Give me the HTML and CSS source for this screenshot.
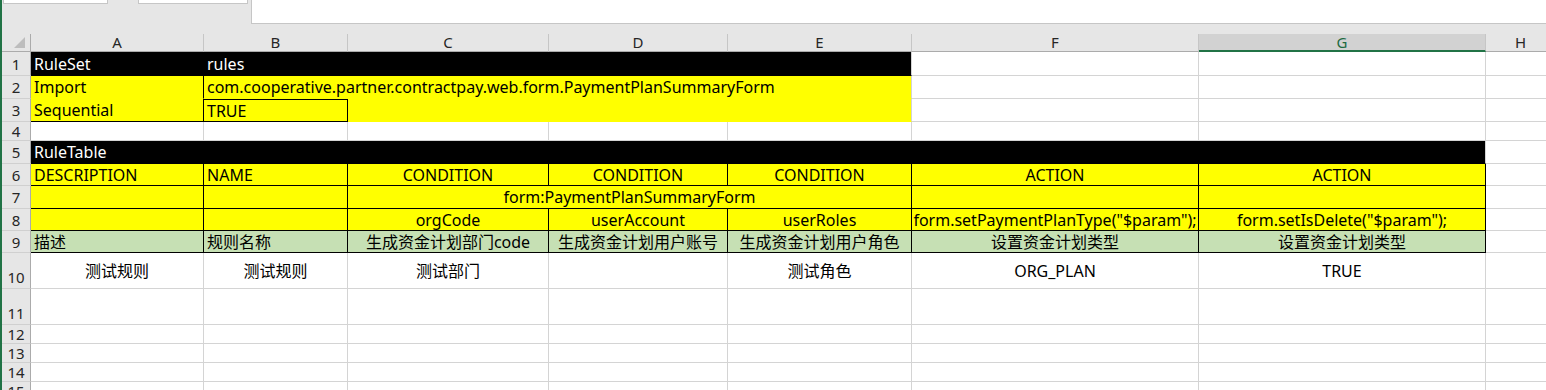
FILE: index.html
```html
<!DOCTYPE html>
<html lang="zh-CN">
<head>
    <meta charset="UTF-8">
    <meta name="viewport" content="width=device-width, initial-scale=1.0">
    <title>RuleTable - Excel</title>
    <link rel="stylesheet" href="styles.css">
</head>

<body>
    <div class="excel">
        <!-- barre du haut : zone de nom + barre de formule -->
        <div class="toolbar">
            <div class="toolbar-left">
                <span class="stub stub-name"></span>
                <span class="stub stub-fx"></span>
            </div>
            <div class="formula-bar"></div>
        </div>

        <!-- la feuille -->
        <div class="sheet">
            <!-- entetes de colonnes -->
            <div class="corner">
                <svg width="12" height="12" viewBox="0 0 12 12"><polygon points="11,0 11,11 0,11" fill="#bdbdbd"/></svg>
            </div>
            <div class="colhead">A</div>
            <div class="colhead">B</div>
            <div class="colhead">C</div>
            <div class="colhead">D</div>
            <div class="colhead">E</div>
            <div class="colhead">F</div>
            <div class="colhead selected">G</div>
            <div class="colhead">H</div>

            <!-- ligne 1 -->
            <div class="rowhead">1</div>
            <div class="c blk">RuleSet</div>
            <div class="c blk span4 edge">rules</div>
            <div class="c"></div>
            <div class="c"></div>
            <div class="c"></div>

            <!-- ligne 2 -->
            <div class="rowhead">2</div>
            <div class="c yel br">Import</div>
            <div class="c yel span4 edge">com.cooperative.partner.contractpay.web.form.PaymentPlanSummaryForm</div>
            <div class="c"></div>
            <div class="c"></div>
            <div class="c"></div>

            <!-- ligne 3 -->
            <div class="rowhead">3</div>
            <div class="c yel br bb">Sequential</div>
            <div class="c yel br bb bt">TRUE</div>
            <div class="c yel span3 edge"></div>
            <div class="c"></div>
            <div class="c"></div>
            <div class="c"></div>

            <!-- ligne 4 -->
            <div class="rowhead">4</div>
            <div class="c"></div>
            <div class="c"></div>
            <div class="c"></div>
            <div class="c"></div>
            <div class="c"></div>
            <div class="c"></div>
            <div class="c"></div>
            <div class="c"></div>

            <!-- ligne 5 -->
            <div class="rowhead">5</div>
            <div class="c blk span7 edge">RuleTable</div>
            <div class="c"></div>

            <!-- ligne 6 -->
            <div class="rowhead">6</div>
            <div class="c yel bk">DESCRIPTION</div>
            <div class="c yel bk">NAME</div>
            <div class="c yel bk ctr">CONDITION</div>
            <div class="c yel bk ctr">CONDITION</div>
            <div class="c yel bk ctr">CONDITION</div>
            <div class="c yel bk ctr">ACTION</div>
            <div class="c yel bk ctr">ACTION</div>
            <div class="c"></div>

            <!-- ligne 7 -->
            <div class="rowhead">7</div>
            <div class="c yel bk"></div>
            <div class="c yel bk"></div>
            <div class="c yel bk ctr span3">form:PaymentPlanSummaryForm</div>
            <div class="c yel bk"></div>
            <div class="c yel bk"></div>
            <div class="c"></div>

            <!-- ligne 8 -->
            <div class="rowhead">8</div>
            <div class="c yel bk"></div>
            <div class="c yel bk"></div>
            <div class="c yel bk ctr">orgCode</div>
            <div class="c yel bk ctr">userAccount</div>
            <div class="c yel bk ctr">userRoles</div>
            <div class="c yel bk ctr">form.setPaymentPlanType("$param");</div>
            <div class="c yel bk ctr">form.setIsDelete("$param");</div>
            <div class="c"></div>

            <!-- ligne 9 -->
            <div class="rowhead">9</div>
            <div class="c grn bk">描述</div>
            <div class="c grn bk">规则名称</div>
            <div class="c grn bk ctr">生成资金计划部门code</div>
            <div class="c grn bk ctr">生成资金计划用户账号</div>
            <div class="c grn bk ctr">生成资金计划用户角色</div>
            <div class="c grn bk ctr">设置资金计划类型</div>
            <div class="c grn bk ctr">设置资金计划类型</div>
            <div class="c"></div>

            <!-- ligne 10 -->
            <div class="rowhead tall">10</div>
            <div class="c ctr">测试规则</div>
            <div class="c ctr">测试规则</div>
            <div class="c ctr">测试部门</div>
            <div class="c ctr"></div>
            <div class="c ctr">测试角色</div>
            <div class="c ctr">ORG_PLAN</div>
            <div class="c ctr">TRUE</div>
            <div class="c"></div>

            <!-- lignes vides -->
            <div class="rowhead tall">11</div>
            <div class="c"></div><div class="c"></div><div class="c"></div><div class="c"></div>
            <div class="c"></div><div class="c"></div><div class="c"></div><div class="c"></div>

            <div class="rowhead">12</div>
            <div class="c"></div><div class="c"></div><div class="c"></div><div class="c"></div>
            <div class="c"></div><div class="c"></div><div class="c"></div><div class="c"></div>

            <div class="rowhead">13</div>
            <div class="c"></div><div class="c"></div><div class="c"></div><div class="c"></div>
            <div class="c"></div><div class="c"></div><div class="c"></div><div class="c"></div>

            <div class="rowhead">14</div>
            <div class="c"></div><div class="c"></div><div class="c"></div><div class="c"></div>
            <div class="c"></div><div class="c"></div><div class="c"></div><div class="c"></div>

            <div class="rowhead">15</div>
            <div class="c"></div><div class="c"></div><div class="c"></div><div class="c"></div>
            <div class="c"></div><div class="c"></div><div class="c"></div><div class="c"></div>
        </div>
    </div>
</body>

</html>
```

FILE: styles.css
```css
body {
    margin: 0;
    background: #fff;
    font-family: "Noto Sans", "Noto Sans CJK SC", sans-serif;
}
/* cadre de la fenetre, liseré vert a gauche */
.excel {
    width: 1546px;
    height: 390px;
    overflow: hidden;
    border-left: 2px solid #217346;
    box-sizing: border-box;
}

/* barre du haut */
.toolbar {
    display: flex;
    height: 34px;
    background: #e6e6e6;
}
.toolbar-left {
    display: flex;
    align-items: flex-start;
    width: 249px;
}
.stub {
    display: block;
    height: 3px;
    background: #fff;
    border: 1px solid #c6c6c6;
    border-top: 0;
}
.stub-name {
    margin-left: 1px;
    width: 103px;
}
.stub-fx {
    margin-left: 30px;
    width: 108px;
}
.formula-bar {
    flex: 1;
    height: 24px;
    box-sizing: border-box;
    background: #fff;
    border-left: 1px solid #c6c6c6;
    border-bottom: 1px solid #c6c6c6;
}

/* grille de la feuille */
.sheet {
    display: grid;
    grid-template-columns: 29px 173px 144px 201px 179px 184px 287px 287px 70px;
    grid-template-rows: 18px 24px 23px 23px 19px 23px 22px 23px 22px 22px 36px 36px 19px 19px 19px 19px;
}
.sheet > div {
    box-sizing: border-box;
    min-width: 0;
}

/* entetes */
.corner {
    background: #e6e6e6;
    border-right: 1px solid #ababab;
    border-bottom: 1px solid #ababab;
    display: flex;
    align-items: flex-end;
    justify-content: flex-end;
    padding: 0 4px 2px 0;
}
.corner svg {
    display: block;
}
.colhead {
    background: #e6e6e6;
    border-right: 1px solid #c6c6c6;
    border-bottom: 1px solid #ababab;
    color: #262626;
    font-size: 15px;
    line-height: 17px;
    text-align: center;
}
.colhead.selected {
    background: #d2d2d2;
    color: #1e6b43;
    border-bottom: 2px solid #217346;
}
.rowhead {
    background: #e6e6e6;
    border-right: 1px solid #ababab;
    border-bottom: 1px solid #d0d0d0;
    color: #262626;
    font-size: 15px;
    display: flex;
    align-items: center;
    justify-content: center;
}
.rowhead.tall {
    align-items: flex-end;
    padding-bottom: 1px;
    line-height: 20px;
}

/* cellules */
.c {
    display: flex;
    align-items: center;
    padding: 0 3px;
    border-right: 1px solid #d4d4d4;
    border-bottom: 1px solid #d4d4d4;
    font-size: 16px;
    line-height: 20px;
    color: #000;
    white-space: nowrap;
    overflow: hidden;
}
.ctr {
    justify-content: center;
}
.span3 {
    grid-column: span 3;
}
.span4 {
    grid-column: span 4;
}
.span7 {
    grid-column: span 7;
}
.blk {
    background: #000;
    color: #fff;
    border-color: #000;
}
.yel {
    background: #ffff00;
    border-color: #ffff00;
}
.grn {
    background: #c6e0b4;
}
/* bordures noires */
.bk {
    border-right-color: #000;
    border-bottom-color: #000;
}
.br {
    border-right-color: #000;
}
.bb {
    border-bottom-color: #000;
}
.bt {
    border-top: 1px solid #000;
}
/* retour au quadrillage gris a droite d'une zone remplie */
.edge {
    border-right-color: #d4d4d4;
}
```
